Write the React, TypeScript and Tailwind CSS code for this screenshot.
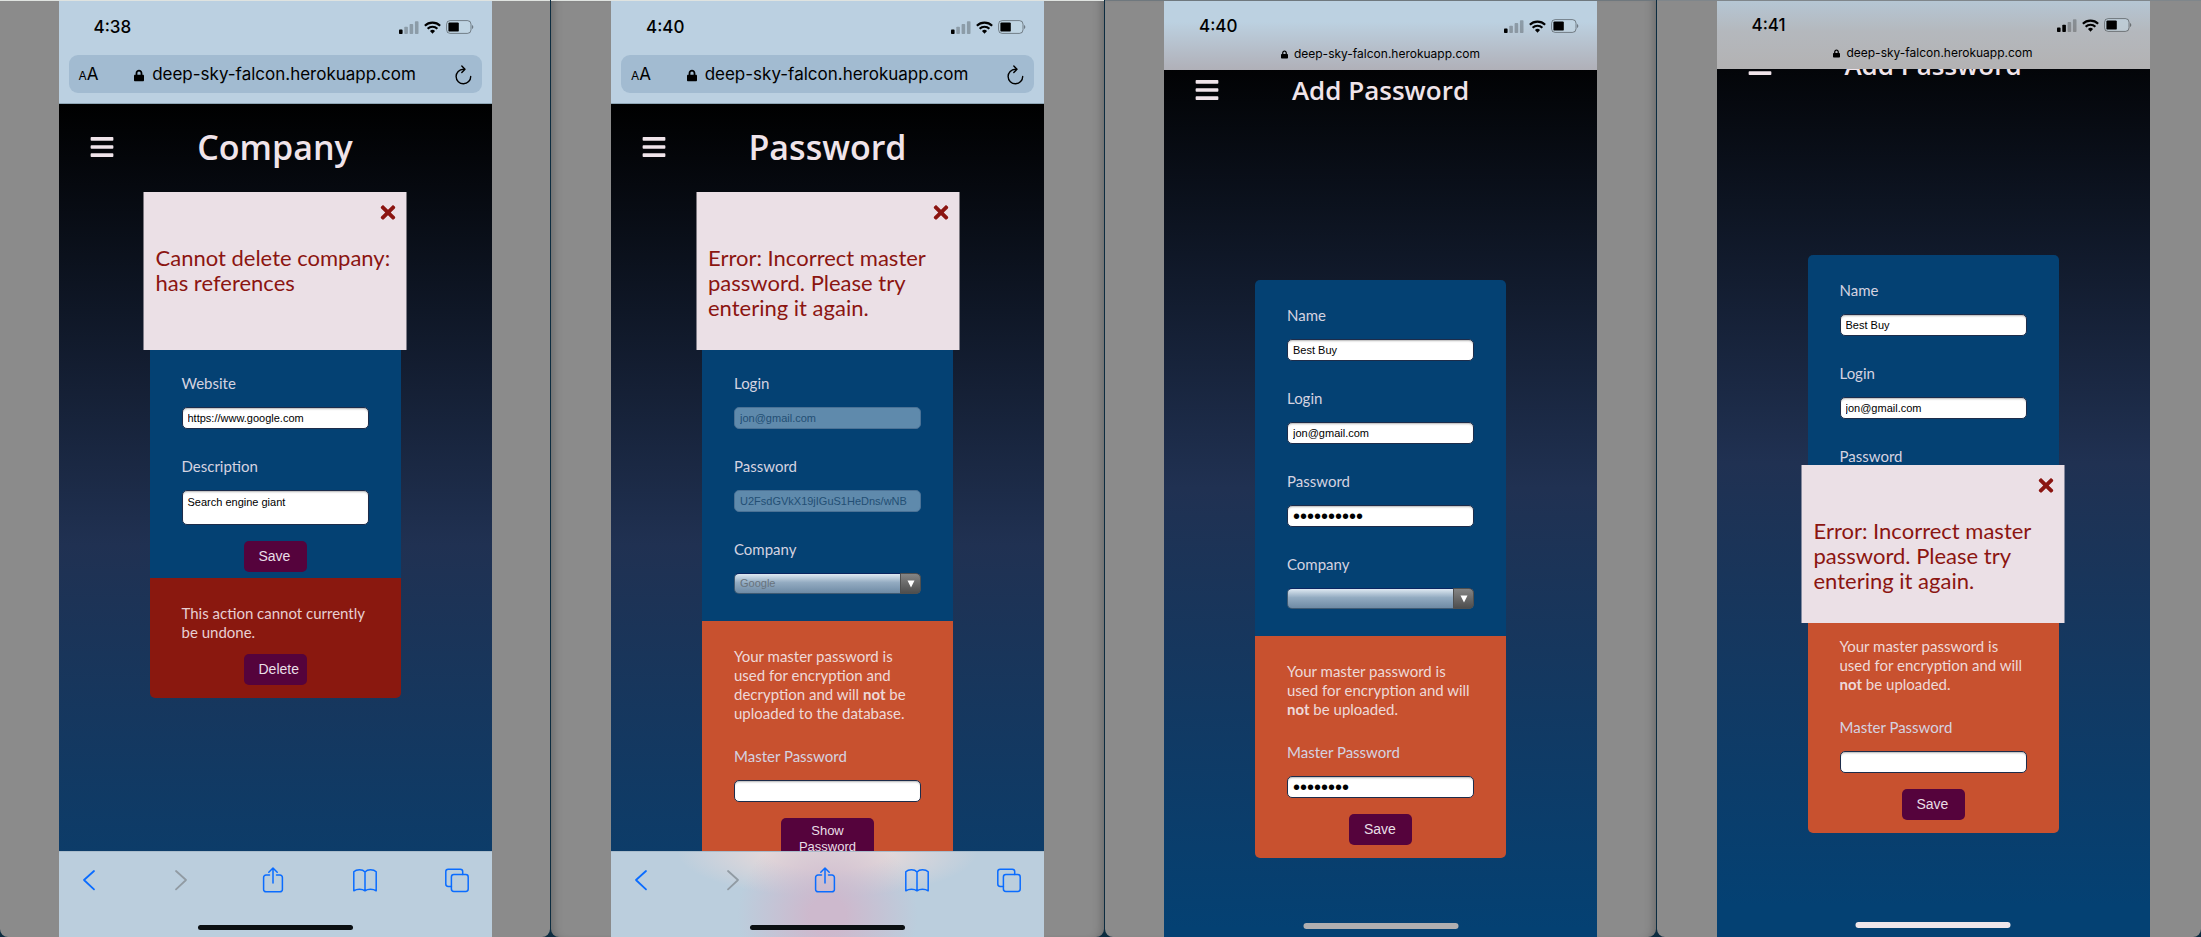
import React, { useId } from "react";
import { FaBars, FaTimes, FaLock } from "react-icons/fa";

type BarTone = "mist" | "gray";

function StatusBar({ time, strength }: { time: string; strength: number }) {
  return (
    <div className="flex h-[18px] items-center justify-between pr-[18px] pl-[35px] text-black">
      <span className="font-['Inter',sans-serif] text-[17px] leading-[18px] font-medium">{time}</span>
      <span className="flex items-center gap-[5px]">
        <svg width="20" height="13" viewBox="0 0 20 13" aria-hidden="true">
          {[0, 1, 2, 3].map((i) => (
            <rect
              key={i}
              x={i * 5.3}
              y={8.6 - i * 2.8}
              width="3.6"
              height={4.4 + i * 2.8}
              rx="0.8"
              fill="#000"
              fillOpacity={i < strength ? 1 : 0.25}
            />
          ))}
        </svg>
        <svg width="17" height="13" viewBox="0 0 16 12" aria-hidden="true" fill="none" stroke="#000" strokeWidth="2">
          <path d="M0.8 4.4a10.2 10.2 0 0 1 14.4 0" />
          <path d="M3.4 7.2a6.5 6.5 0 0 1 9.2 0" />
          <path d="M8 11.8 5.6 9.3a3.4 3.4 0 0 1 4.8 0Z" fill="#000" stroke="none" />
        </svg>
        <svg width="28" height="14" viewBox="0 0 28 14" aria-hidden="true">
          <rect x="0.6" y="0.6" width="24.4" height="12.8" rx="3.6" fill="#c6dae6" fillOpacity="0.5" stroke="#000" strokeOpacity="0.4" />
          <rect x="2.4" y="2.4" width="10.4" height="9.2" rx="1.2" fill="#000" />
          <path d="M26.2 5v4c1.4-.5 1.4-3.5 0-4Z" fill="#000" fillOpacity="0.5" />
        </svg>
      </span>
    </div>
  );
}

function AddressBar({ time }: { time: string }) {
  return (
    <header className="shrink-0 border-b border-[#8fa6b5] bg-[#bbd0e1] px-[10px] pt-[17px] pb-[10px]">
      <div className="-mx-[10px]">
        <StatusBar time={time} strength={1} />
      </div>
      <div className="mt-[19px] grid h-[38px] grid-cols-[1fr_auto_1fr] items-center rounded-[9px] bg-[#a2bbd1] px-[10px] pt-[2px] font-['Inter',sans-serif] text-black">
        <button type="button" aria-label="Text size" className="flex items-baseline justify-self-start">
          <span className="text-[12px]">A</span>
          <span className="text-[17px]">A</span>
        </button>
        <span className="flex items-center gap-2 text-[17px]">
          <FaLock className="h-[13px] w-[10px]" aria-hidden="true" />
          deep-sky-falcon.herokuapp.com
        </span>
        <button type="button" aria-label="Reload" className="justify-self-end">
          <svg width="17" height="20" viewBox="0 0 17 20" fill="none" stroke="#000" strokeWidth="1.4" strokeLinecap="round" strokeLinejoin="round">
            <path d="M9.4 4.2H8.3a7.3 7.3 0 1 0 7.4 7.2" />
            <path d="M6.8 1 10 4.2 6.8 7.6" />
          </svg>
        </button>
      </div>
    </header>
  );
}

function CompactBar({ time, strength, tone }: { time: string; strength: number; tone: BarTone }) {
  const look =
    tone === "mist"
      ? "pt-[16px] bg-linear-to-b from-[#bcd1e1] from-30% to-[#b0b0b8]"
      : "pt-[15px] bg-linear-to-b from-[#b5c6d4] via-[#b4b8bd] via-45% to-[#b3b2b3]";
  return (
    <header className={`shrink-0 pb-[7px] ${look}`}>
      <StatusBar time={time} strength={strength} />
      <div className="mt-[10px] flex h-[18px] items-center justify-center gap-[6px] font-['Inter',sans-serif] text-[12px] text-black">
        <FaLock className="h-[9px] w-[7px]" aria-hidden="true" />
        deep-sky-falcon.herokuapp.com
      </div>
    </header>
  );
}

const glyph = {
  width: 24,
  height: 26,
  viewBox: "0 0 24 26",
  fill: "none",
  stroke: "currentColor",
  strokeWidth: 1.5,
  strokeLinecap: "round" as const,
  strokeLinejoin: "round" as const,
};

function Toolbar({ tinted }: { tinted?: boolean }) {
  return (
    <nav
      aria-label="Browser"
      className={`flex h-[86px] shrink-0 flex-col items-center justify-between border-t border-[#a9bccb] bg-[#bbcedd] pt-[15px] pb-[7px] ${
        tinted
          ? "bg-[radial-gradient(ellipse_90px_90px_at_50%_75%,#cdb9cd_20%,transparent),radial-gradient(ellipse_150px_45px_at_50%_0%,#e2d8da_40%,transparent)]"
          : ""
      }`}
    >
      <div className="flex w-full items-center justify-between pr-[23px] pl-[18px] text-[#0a6cff]">
        <button type="button" aria-label="Back">
          <svg {...glyph} strokeWidth={1.8}>
            <path d="M17 4 7 13l10 9.4" />
          </svg>
        </button>
        <button type="button" aria-label="Forward" className="text-[#919ba3]" disabled>
          <svg {...glyph} strokeWidth={1.8}>
            <path d="m7 4 10 9-10 9.4" />
          </svg>
        </button>
        <button type="button" aria-label="Share">
          <svg {...glyph}>
            <path d="M8.5 8H5a2.4 2.4 0 0 0-2.4 2.4v12A2.4 2.4 0 0 0 5 24.8h14a2.4 2.4 0 0 0 2.4-2.4v-12A2.4 2.4 0 0 0 19 8h-3.5" />
            <path d="M12 16V1.2M7.8 5.2 12 1l4.2 4.2" />
          </svg>
        </button>
        <button type="button" aria-label="Bookmarks">
          <svg {...glyph}>
            <path d="M12 5C10.5 3.3 8.5 2.8 6.5 2.8S2.3 3.3 0.8 4.8V23.8c1.6-1.1 3.6-1.6 5.7-1.6s4 .4 5.5 1.6c1.5-1.2 3.4-1.6 5.5-1.6s4.1.5 5.7 1.6V4.8c-1.5-1.5-3.7-2-5.7-2S13.5 3.3 12 5Zm0 0v18.8" />
          </svg>
        </button>
        <button type="button" aria-label="Tabs">
          <svg {...glyph}>
            <path d="M6.4 19.5H3.2A2.4 2.4 0 0 1 .8 17.1V4.6a2.4 2.4 0 0 1 2.4-2.4h12.1a2.4 2.4 0 0 1 2.4 2.4v2.8" />
            <rect x="6.4" y="7.5" width="16.8" height="17" rx="2.4" />
          </svg>
        </button>
      </div>
      <div className="h-[5px] w-[155px] rounded-full bg-[#0b0f12]" />
    </nav>
  );
}

const labelClass = "block text-[15px] leading-[19px] text-[#d5d3e0]";
const boxClass =
  "block w-full rounded-[5px] border border-[#1d2c4a] bg-white px-[5px] font-['Liberation_Sans',sans-serif] text-black shadow-[inset_0_2px_2px_-1px_rgba(0,0,0,0.3)] disabled:border-[#4b7296] disabled:bg-[#5f8aac] disabled:text-[#234f74] disabled:shadow-none";

function Field({
  label,
  value = "",
  secret,
  disabled,
  multiline,
}: {
  label: string;
  value?: string;
  secret?: boolean;
  disabled?: boolean;
  multiline?: boolean;
}) {
  const id = useId();
  return (
    <div className="flex flex-col gap-[14px]">
      <label htmlFor={id} className={labelClass}>
        {label}
      </label>
      {multiline ? (
        <textarea id={id} defaultValue={value} className={`${boxClass} h-[35px] resize-none pt-[3px] text-[11px]`} />
      ) : (
        <input
          id={id}
          type={secret ? "password" : "text"}
          defaultValue={value}
          disabled={disabled}
          className={`${boxClass} h-[22px] ${secret ? "text-[20px]" : "text-[11px]"}`}
        />
      )}
    </div>
  );
}

function CompanyField({ value = "", disabled }: { value?: string; disabled?: boolean }) {
  const id = useId();
  return (
    <div className="flex flex-col gap-[14px]">
      <label htmlFor={id} className={labelClass}>
        Company
      </label>
      <div className="relative">
        <select
          id={id}
          defaultValue={value}
          disabled={disabled}
          className="block h-[21px] w-full appearance-none rounded-[5px] border border-[#3f5a73] border-t-[#0a2560] bg-linear-to-b from-[#dfe9f2] via-[#93abc1] via-45% to-[#6f8ba5] px-[5px] font-['Liberation_Sans',sans-serif] text-[11px] text-[#68737d] disabled:opacity-100"
        >
          <option value={value}>{value}</option>
        </select>
        <span className="pointer-events-none absolute inset-y-0 right-0 flex w-[21px] items-center justify-center rounded-r-[5px] border border-[#4f4f4f] bg-linear-to-b from-[#858585] to-[#4e4e4e]">
          <svg width="8" height="8" viewBox="0 0 8 8" aria-hidden="true">
            <path d="M0.5 0.5h7L4 7.5Z" fill="#fff" />
          </svg>
        </span>
      </div>
    </div>
  );
}

const buttonClass =
  "mx-auto block rounded-[5px] bg-[#55033c] font-['Liberation_Sans',sans-serif] text-[#e9dfe6]";

function ActionButton({ children }: { children: string }) {
  return (
    <button type="button" className={`${buttonClass} h-[31px] w-[63px] overflow-visible pl-[15px] text-left text-[14px]`}>
      {children}
    </button>
  );
}

function Alert({ children, className }: { children: React.ReactNode; className: string }) {
  return (
    <div
      role="alert"
      className={`absolute left-1/2 z-10 h-[158px] w-[263px] -translate-x-1/2 bg-[#ebe0e6] px-[12px] pt-[53px] text-[22px] leading-[25px] text-[#8b1511] ${className}`}
    >
      <button type="button" aria-label="Close" className="absolute top-[10px] right-[8px] text-[#8b1511]">
        <FaTimes className="size-[21px]" />
      </button>
      {children}
    </div>
  );
}

function PageHeader({ title, small }: { title: string; small?: boolean }) {
  return (
    <div className="grid h-[86px] grid-cols-[1fr_auto_1fr] items-center text-[#f0e4ea]">
      <button type="button" aria-label="Menu" className="justify-self-start pl-[30px]">
        <FaBars className="size-[26px]" />
      </button>
      <h1
        className={`font-['Open_Sans',sans-serif] font-semibold ${
          small ? "text-[26px] leading-[32px]" : "text-[34px] leading-[40px]"
        }`}
      >
        {title}
      </h1>
    </div>
  );
}

function Page({ className = "", children }: { className?: string; children: React.ReactNode }) {
  return (
    <div
      className={`min-h-[882px] bg-[#044173] bg-[linear-gradient(#000_0px,#203152_441px,#044173_882px)] bg-no-repeat ${className}`}
    >
      {children}
    </div>
  );
}

function Card({ className, children }: { className: string; children: React.ReactNode }) {
  return <form className={`mx-auto w-[251px] overflow-hidden rounded-[5px] bg-[#044173] ${className}`}>{children}</form>;
}

function MasterSection({ text, value, children }: { text: React.ReactNode; value?: string; children: React.ReactNode }) {
  return (
    <section className="bg-[#c8512f] px-8 pt-[26px] pb-[13px]">
      <p className="-mr-2 mb-[24px] text-[15px] leading-[19px] text-[#eed9d8]">{text}</p>
      <Field label="Master Password" value={value} secret />
      <div className="mt-[16px]">{children}</div>
    </section>
  );
}

const addText = (
  <>
    Your master password is
    <br />
    used for encryption and will
    <br />
    <b>not</b> be uploaded.
  </>
);

function AddPasswordCard({ password, master }: { password?: string; master?: string }) {
  return (
    <Card className="mt-[147px]">
      <div className="flex flex-col gap-[28px] px-8 pt-[26px] pb-[27px]">
        <Field label="Name" value="Best Buy" />
        <Field label="Login" value="jon@gmail.com" />
        <Field label="Password" value={password} secret />
        <CompanyField />
      </div>
      <MasterSection text={addText} value={master}>
        <ActionButton>Save</ActionButton>
      </MasterSection>
    </Card>
  );
}

function Frame({ className = "", children }: { className?: string; children: React.ReactNode }) {
  return (
    <section className={`flex min-w-0 justify-center overflow-hidden rounded-b-[8px] border-t bg-[#8b8b8b] ${className}`}>
      <div className="relative flex w-full max-w-[433px] flex-col overflow-hidden">{children}</div>
    </section>
  );
}

export default function App() {
  return (
    <main className="grid h-screen grid-cols-[550fr_553fr_551fr_544fr] gap-px overflow-hidden bg-[#0c2c40] font-['Lato',sans-serif]">
      <Frame className="border-[#dfe3e0]">
        <AddressBar time="4:38" />
        <div className="relative min-h-0 flex-1 overflow-hidden">
          <Page>
            <PageHeader title="Company" />
            <Card className="mt-[75px]">
              <div className="flex flex-col gap-[28px] px-8 pt-[109px]">
                <Field label="Website" value="https://www.google.com" />
                <Field label="Description" value="Search engine giant" multiline />
              </div>
              <div className="pt-[16px] pb-[6px]">
                <ActionButton>Save</ActionButton>
              </div>
              <section className="bg-[#8a180f] px-8 pt-[26px] pb-[13px]">
                <p className="-mr-2 mb-[12px] text-[15px] leading-[19px] text-[#e8cfd2]">
                  This action cannot currently
                  <br />
                  be undone.
                </p>
                <ActionButton>Delete</ActionButton>
              </section>
            </Card>
          </Page>
          <Alert className="top-[88px]">
            Cannot delete company:
            <br />
            has references
          </Alert>
        </div>
        <Toolbar />
      </Frame>

      <Frame className="border-[#dfe3e0] shadow-[inset_10px_0_10px_-8px_rgba(0,0,0,0.25),inset_-10px_0_10px_-8px_rgba(0,0,0,0.25)]">
        <AddressBar time="4:40" />
        <div className="relative min-h-0 flex-1 overflow-hidden">
          <Page>
            <PageHeader title="Password" />
            <Card className="mt-[75px]">
              <div className="flex flex-col gap-[28px] px-8 pt-[109px] pb-[27px]">
                <Field label="Login" value="jon@gmail.com" disabled />
                <Field label="Password" value="U2FsdGVkX19jIGuS1HeDns/wNB" disabled />
                <CompanyField value="Google" disabled />
              </div>
              <MasterSection
                text={
                  <>
                    Your master password is
                    <br />
                    used for encryption and
                    <br />
                    decryption and will <b>not</b> be
                    <br />
                    uploaded to the database.
                  </>
                }
              >
                <button type="button" className={`${buttonClass} h-[42px] w-[93px] px-4 text-[13px] leading-[16px]`}>
                  Show Password
                </button>
              </MasterSection>
            </Card>
          </Page>
          <Alert className="top-[88px]">
            Error: Incorrect master
            <br />
            password. Please try
            <br />
            entering it again.
          </Alert>
        </div>
        <Toolbar tinted />
      </Frame>

      <Frame className="border-[#6f787e] shadow-[inset_-10px_0_10px_-8px_rgba(0,0,0,0.25)]">
        <CompactBar time="4:40" strength={1} tone="mist" />
        <div className="relative min-h-0 flex-1 overflow-hidden bg-[#044173]">
          <Page className="-mt-[23px]">
            <PageHeader title="Add Password" small />
            <AddPasswordCard password="abcdefghij" master="abcdefgh" />
          </Page>
        </div>
        <div className="absolute bottom-[8px] left-1/2 h-[6px] w-[155px] -translate-x-1/2 rounded-full bg-[#b0afb1]" />
      </Frame>

      <Frame className="border-[#7f868b] pl-2">
        <CompactBar time="4:41" strength={2} tone="gray" />
        <div className="relative min-h-0 flex-1 overflow-hidden bg-[#044173]">
          <Page className="-mt-[47px]">
            <PageHeader title="Add Password" small />
            <AddPasswordCard />
          </Page>
          <Alert className="top-[396px]">
            Error: Incorrect master
            <br />
            password. Please try
            <br />
            entering it again.
          </Alert>
        </div>
        <div className="absolute bottom-[9px] left-1/2 h-[6px] w-[155px] -translate-x-1/2 rounded-full bg-[#efe6ea]" />
      </Frame>
    </main>
  );
}
